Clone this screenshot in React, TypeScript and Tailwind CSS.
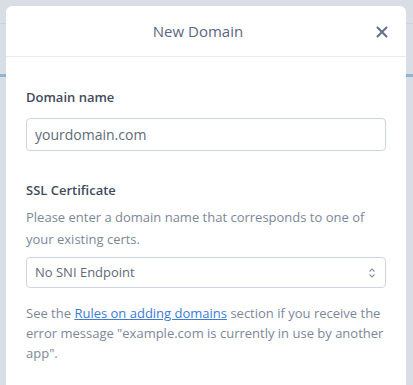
import React from "react";

export default function App() {
  return (
    <div className="relative w-[413px] h-[385px] overflow-hidden bg-[#d9dde4]" style={{ fontFamily: '"Open Sans", "Noto Sans", sans-serif' }}>
      <div className="absolute left-0 right-0 top-[23px] h-px bg-[#cdd2da]" />
      <div className="absolute left-0 right-0 top-[74px] h-[3px] bg-[#8fb4d6]" />
      <div className="absolute left-[6px] top-[6px] w-[400px] h-[400px] bg-white rounded-[6px]">
        <div className="relative h-[51px] border-b border-[#e8ebf0] flex items-center justify-center pr-[16px]">
          <span className="text-[15px] text-[#5a6880]">New Domain</span>
          <svg className="absolute right-[18px] top-[20px]" width="12" height="12" viewBox="0 0 12 12">
            <path d="M1.5 1.5 L10.5 10.5 M10.5 1.5 L1.5 10.5" stroke="#5f6e88" strokeWidth="2" strokeLinecap="round" />
          </svg>
        </div>
        <div className="px-[20px] pt-[30px]">
          <div className="text-[13px] font-semibold text-[#3f4b5c] leading-[20px]">Domain name</div>
          <div className="mt-[11px] h-[33px] rounded-[4px] border border-[#cdd5e3] flex items-center px-[8px] text-[14px] text-[#5f6a79]">
            yourdomain.com
          </div>
          <div className="mt-[29px] text-[13px] font-semibold text-[#3f4b5c] leading-[20px]">SSL Certificate</div>
          <div className="mt-[6px] text-[13px] text-[#7c879a] leading-[22px]">
            Please enter a domain name that corresponds to one of your existing certs.
          </div>
          <div className="mt-[7px] h-[31px] rounded-[4px] border border-[#cdd5e3] flex items-center justify-between px-[8px] text-[13px] text-[#5f6a79]">
            <span>No SNI Endpoint</span>
            <svg width="8" height="12" viewBox="0 0 8 12" className="mr-[1px]">
              <path d="M1.5 4.5 L4 2 L6.5 4.5 M1.5 7.5 L4 10 L6.5 7.5" stroke="#8a94a6" strokeWidth="1.2" fill="none" />
            </svg>
          </div>
          <div className="mt-[15px] text-[13px] text-[#7c879a] leading-[20px]">
            See the <a className="text-[#3b7bd6] underline">Rules on adding domains</a> section if you receive the error message "example.com is currently in use by another app".
          </div>
        </div>
      </div>
    </div>
  );
}
